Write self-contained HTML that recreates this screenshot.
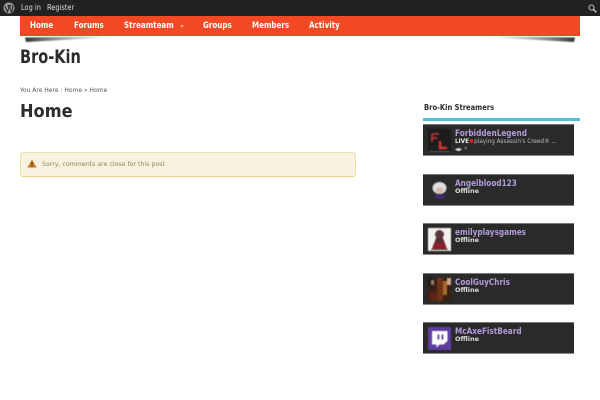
<!DOCTYPE html>
<html><head><meta charset="utf-8"><style>
html,body{margin:0;padding:0;background:#fff;width:600px;height:400px;overflow:hidden}
body{font-family:"DejaVu Sans",sans-serif;position:relative}
.a{position:absolute;white-space:nowrap;transform-origin:0 50%}
#top{left:0;top:0;width:600px;height:16px;background:#222}
.tl{top:3px;font-size:7.5px;line-height:10px;color:#ddd;transform:scaleX(.88)}
#nav{left:20px;top:16px;width:560px;height:20px;background:#f04923}
.n{top:16px;height:20px;line-height:20px;font-size:8.5px;font-weight:bold;color:#fff;transform:scaleX(.84)}
.card{position:absolute;left:423px;width:151px;height:32px;background:#2a2a2a;border-top:1px solid #777;border-bottom:1px solid #888;box-sizing:border-box}
.av{position:absolute;left:5px;top:4px;width:23px;height:23px;overflow:hidden;filter:blur(.4px)}
.nm{position:absolute;left:32px;top:3.5px;font-size:8.5px;line-height:11px;font-weight:bold;color:#b19cd9;white-space:nowrap;transform-origin:0 50%;transform:scaleX(.86)}
.of{position:absolute;left:32px;top:11.5px;font-size:6.5px;line-height:9px;font-weight:bold;color:#ddd;white-space:nowrap;transform-origin:0 50%}
</style></head><body>
<div class="a" id="top"></div>
<svg class="a" style="left:3px;top:2px" width="12" height="12" viewBox="0 0 12 12"><circle cx="6" cy="6" r="5.5" fill="#999"/><path d="M2 4l2.300 6 1.500-4-1-2.500M5 3.500h3.400M6.300 3.500l2.200 6.500 1.200-3.500c.4-1 .1-2-.5-3" fill="none" stroke="#222" stroke-width="1"/></svg>
<div class="a tl" style="left:21px">Log in</div>
<div class="a tl" style="left:47px">Register</div>
<svg class="a" style="left:588px;top:4px" width="9" height="9" viewBox="0 0 9 9"><circle cx="3.500" cy="3.500" r="2.500" fill="none" stroke="#bbb" stroke-width="1.100"/><path d="M5.300 5.300L8.300 8.300" stroke="#bbb" stroke-width="1.600"/></svg>

<svg class="a" style="left:20px;top:36px;filter:blur(.5px)" width="560" height="8" viewBox="0 0 560 8"><defs><linearGradient id="l" x1="0" x2="1"><stop offset="0" stop-color="#333"/><stop offset="1" stop-color="#bbb" stop-opacity="0"/></linearGradient><linearGradient id="r" x1="1" x2="0"><stop offset="0" stop-color="#333"/><stop offset="1" stop-color="#bbb" stop-opacity="0"/></linearGradient></defs><path d="M5 1.500L100 0V1L6 6z" fill="url(#l)"/><path d="M555 1.500L460 0V1L554 6z" fill="url(#r)"/></svg>
<div class="a" id="nav"></div>
<div class="a n" style="left:30px">Home</div>
<div class="a n" style="left:74px">Forums</div>
<div class="a n" style="left:124px">Streamteam</div>
<div class="a" style="left:180px;top:25px;width:0;height:0;border:2.500px solid transparent;border-top:3px solid #f8a48e"></div>
<div class="a n" style="left:203px">Groups</div>
<div class="a n" style="left:252px">Members</div>
<div class="a n" style="left:309px">Activity</div>

<div class="a" style="left:20px;top:46px;font-size:19px;line-height:22px;font-weight:bold;color:#2b2b2b;transform:scaleX(.765)">Bro-Kin</div>
<div class="a" style="left:20px;top:87px;font-size:6px;line-height:8px;color:#555">You Are Here : Home » Home</div>
<div class="a" style="left:20px;top:101px;font-size:18px;line-height:22px;font-weight:bold;color:#2b2b2b;transform:scaleX(.9)">Home</div>

<div class="a" style="left:20px;top:152px;width:336px;height:25px;box-sizing:border-box;background:#f7f2df;border:1px solid #ecdfa8;border-bottom:1px solid #e3d391;border-radius:3px"></div>
<svg class="a" style="left:27px;top:159px" width="10" height="9" viewBox="0 0 10 9"><path d="M5 .5L9.500 8.500H.5z" fill="#c47a22"/><rect x="4.500" y="3" width="1" height="3" fill="#5a3a10"/><rect x="4.500" y="6.800" width="1" height="1" fill="#5a3a10"/></svg>
<div class="a" style="left:42px;top:159.500px;font-size:6.500px;line-height:9px;color:#8f8459;transform:scaleX(.96)">Sorry, comments are close for this post</div>

<div class="a" style="left:424px;top:103px;font-size:7.500px;line-height:10px;font-weight:bold;color:#2b2b2b;transform:scaleX(.9)">Bro-Kin Streamers</div>
<div class="a" style="left:423px;top:118px;width:157px;height:3px;background:#55bfd2"></div>

<div class="card" style="top:124px">
<div class="av" style="background:#1c1c1c"><svg width="23" height="23" viewBox="0 0 23 23"><path d="M4 5h7M4 5v8M4 9h5" stroke="#a33" stroke-width="2" fill="none"/><path d="M12 12v7h7" stroke="#d33" stroke-width="2.500" fill="none"/><rect x="1" y="22" width="21" height="1" fill="#555"/></svg></div>
<div class="nm">ForbiddenLegend</div>
<div class="of" style="font-weight:normal;color:#bbb;transform:scaleX(.87)"><b style="color:#eee">LIVE</b><span style="display:inline-block;width:4px;height:4px;background:#e21b1b;border-radius:50%;margin:0 1px 0 1px"></span>playing Assassin's Creed® ...</div>
<svg style="position:absolute;left:32px;top:22px" width="7" height="5" viewBox="0 0 7 5"><path d="M0 2.500Q3.500-1 7 2.500 3.500 6 0 2.500z" fill="#bbb"/></svg>
<div style="position:absolute;left:41px;top:21px;font-size:5px;line-height:7px;color:#888">4</div>
</div>

<div class="card" style="top:174px">
<div class="av"><svg width="23" height="23" viewBox="0 0 23 23"><ellipse cx="11.500" cy="9" rx="7" ry="6" fill="#ddd"/><ellipse cx="11.500" cy="11.500" rx="3.500" ry="3" fill="#d9b6a8"/><path d="M7 15h9l1 5H6z" fill="#3a2c66"/></svg></div>
<div class="nm">Angelblood123</div>
<div class="of">Offline</div>
</div>

<div class="card" style="top:223px">
<div class="av" style="background:#f3f0ee"><svg width="23" height="23" viewBox="0 0 23 23"><ellipse cx="11.500" cy="6.500" rx="4.500" ry="4.500" fill="#5a3a3a"/><path d="M8 10h7l3 9H5z" fill="#5c2a30"/><path d="M6 15h11l2 6H4z" fill="#8c1f2a"/><path d="M3 21h17v1H3z" fill="#555"/></svg></div>
<div class="nm">emilyplaysgames</div>
<div class="of">Offline</div>
</div>

<div class="card" style="top:273px">
<div class="av" style="background:#3c1f14"><svg width="23" height="23" viewBox="0 0 23 23"><rect x="0" y="0" width="5" height="9" fill="#221a16"/><rect x="3" y="2" width="3" height="5" fill="#8a8078"/><rect x="9" y="0" width="6" height="23" fill="#6d3419"/><rect x="15" y="3" width="4" height="14" fill="#a66a2e"/><rect x="19" y="0" width="4" height="7" fill="#c9a888"/><rect x="2" y="14" width="7" height="9" fill="#5a2416"/></svg></div>
<div class="nm">CoolGuyChris</div>
<div class="of">Offline</div>
</div>

<div class="card" style="top:322px">
<div class="av" style="background:#5f3ea0"><svg width="23" height="23" viewBox="0 0 23 23"><path d="M4 4H19.500V14L15.500 17.500H11.500L8.500 20.500V17.500H4z" fill="#fff"/><rect x="9.500" y="7.500" width="1.800" height="5" fill="#5f3ea0"/><rect x="13.500" y="7.500" width="1.800" height="5" fill="#5f3ea0"/></svg></div>
<div class="nm">McAxeFistBeard</div>
<div class="of">Offline</div>
</div>
</body></html>
